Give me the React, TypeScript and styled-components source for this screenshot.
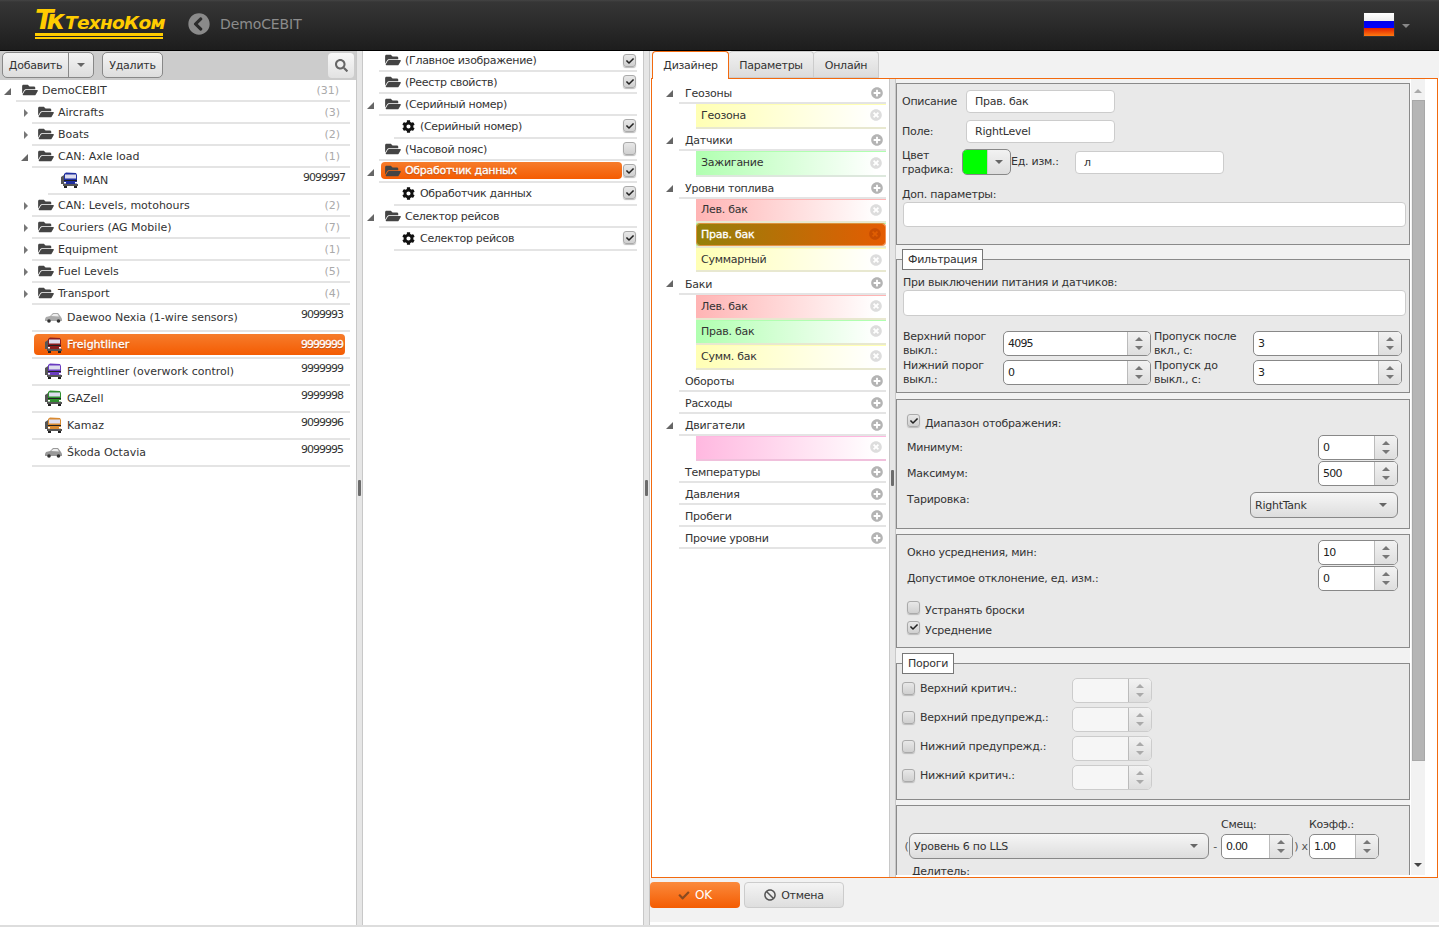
import React from "react";
import styled, { createGlobalStyle } from "styled-components";
import { FaFolderOpen, FaCog, FaCheck, FaPlusCircle, FaTimesCircle, FaBan, FaChevronCircleLeft, FaSearch } from "react-icons/fa";

const Global = createGlobalStyle`
  html, body { margin: 0; padding: 0; height: 927px; overflow: hidden; background: #fff; }
  body { font-family: "DejaVu Sans", Tahoma, sans-serif; font-size: 11px; color: #333; }
  * { box-sizing: border-box; }
`;

const Page = styled.div`width: 1439px; height: 927px; display: flex; flex-direction: column; overflow: hidden;`;

/* Header */
const Header = styled.header`
  height: 51px; flex: none; display: flex; align-items: center; padding: 0 29px 2px 35px;
  background: linear-gradient(#444 0, #363636 2px, #1d1d1d 100%); border-bottom: 1px solid #000;
`;
const Logo = styled.div`width: 133px; height: 30px; display: flex; flex-direction: column; color: #fc0; font-weight: 700; font-style: italic;`;
const LogoTop = styled.div`display: flex; align-items: baseline; height: 22px; line-height: 22px;`;
const LogoMark = styled.span`font-size: 27px; width: 30px; letter-spacing: -7px; flex: none;`;
const LogoName = styled.span`font-size: 18.5px; letter-spacing: -0.7px; white-space: nowrap;`;
const LogoRule = styled.div`height: ${p => p.$h}px; width: ${p => p.$w}px; background: #fc0; margin-top: ${p => p.$t}px;`;
const BackIcon = styled(FaChevronCircleLeft)`margin-left: 20px; width: 22px; height: 22px; color: #8a8a8a;`;
const HeaderTitle = styled.div`margin-left: 10px; font-size: 14px; color: #8c8c8c; letter-spacing: -0.1px;`;
const Flag = styled.div`margin-left: auto; width: 32px; height: 25px; background: linear-gradient(#fff 0, #eee 33%, #0000e8 33%, #0000ff 66%, #e02000 66%, #ff7a10 100%); border: 1px solid #333;`;
const Caret = styled.span`
  display: inline-block; width: 0; height: 0; border-style: solid; border-color: ${p => p.$c || "#666"} transparent transparent;
  border-width: ${p => p.$s || 4}px ${p => p.$s || 4}px 0; flex: none;
`;
const CaretUp = styled(Caret)`
  border-color: transparent transparent ${p => p.$c || "#666"}; border-width: 0 ${p => p.$s || 4}px ${p => p.$s || 4}px;
`;
const FlagCaret = styled(Caret)`margin: 4px 0 0 7px;`;

/* Shell */
const Main = styled.main`flex: none; display: flex; height: 876px; border-bottom: 2px solid #ddd;`;
const LeftPanel = styled.section`width: 356px; flex: none; display: flex; flex-direction: column; background: #fff;`;
const Splitter = styled.div`
  width: ${p => p.$w || 7}px; flex: none; background: #e6e6e6; border-left: 1px solid #c8c8c8; border-right: 1px solid #c8c8c8;
  display: flex; align-items: center; justify-content: center;
`;
const Handle = styled.div`width: 3px; height: 16px; background: #6c6c6c; border-radius: 1px;`;
const MiddlePanel = styled.section`width: 280px; flex: none; background: #fff; letter-spacing: -0.3px;`;
const RightPanel = styled.section`flex: 1; display: flex; flex-direction: column; background: #fff; min-width: 0; letter-spacing: -0.25px;`;

/* Toolbar */
const Toolbar = styled.div`height: 29px; flex: none; background: #ccc; display: flex; align-items: flex-start; padding: 1px 2px 0 2px; letter-spacing: -0.25px;`;
const ToolGroup = styled.div`display: flex; height: 26px; border: 1px solid #888; border-radius: 5px; background: linear-gradient(#f4f4f4, #ddd); margin-right: ${p => p.$mr || 0}px;`;
const ToolBtn = styled.div`display: flex; align-items: center; justify-content: center; width: ${p => p.$w}px; & + & { border-left: 1px solid #888; }`;
const SearchBtn = styled.div`
  margin: 1px 0 0 auto; width: 26px; height: 25px; border-radius: 4px; background: linear-gradient(#f8f8f8, #e2e2e2);
  display: flex; align-items: center; justify-content: center; color: #666; font-size: 13px;
`;

/* Vehicle tree */
const TreeRow = styled.div`display: flex; height: ${p => p.$h}px; margin-right: 6px;`;
const Gutter = styled.div`width: ${p => p.$w}px; flex: none; display: flex; align-items: center; justify-content: flex-end; padding-right: ${p => p.$pr || 5}px;`;
const RowBody = styled.div`flex: 1; min-width: 0; border-bottom: 2px solid #e4e4e4; display: flex; padding-bottom: ${p => p.$pb ?? 1}px;`;
const RowInner = styled.div`
  flex: 1; min-width: 0; display: flex; align-items: center; padding-left: ${p => p.$pl}px; padding-right: ${p => p.$pr || 0}px;
  margin: ${p => (p.$sel ? "2px 5px 1px 2px" : "0 5px 0 2px")}; border-radius: 4px;
  color: ${p => (p.$sel ? "#fff" : "#333")};
  ${p => p.$sel && "-webkit-text-stroke: 0.3px #fff; text-shadow: 0 1px 1px rgba(120,40,0,.5);"}
  background: ${p => (p.$sel ? "linear-gradient(#f67c2c, #f45c02)" : "none")};
`;
const Folder = styled(FaFolderOpen)`width: 16px; height: 14px; color: #444; flex: none; margin-right: 4px;`;
const Count = styled.span`margin-left: auto; color: #aaa;`;
const Code = styled.span`margin-left: auto; color: inherit; align-self: flex-start; margin-top: ${p => p.$mt || 4}px; letter-spacing: -1px;`;
const TriRight = styled.span`width: 0; height: 0; border-style: solid; border-width: 4px 0 4px 4px; border-color: transparent transparent transparent #777;`;
const TriCorner = styled.span`width: 0; height: 0; border-style: solid; border-width: 0 0 7px 7px; border-color: transparent transparent #666 transparent;`;
const VehicleSvg = styled.svg`flex: none; margin-right: 4px;`;

const Truck = ({ c }: { c: string }) => (
  <VehicleSvg width="19" height="18" viewBox="0 0 19 18">
    <path d="M4 3 L6 1.5 L16 2 L17 4 L17 13 L4 13 Z" fill={c} />
    <path d="M1 6 L4 4 L4 13 L1 13 Z" fill="#555" />
    <path d="M5 3.5 L16 3.5 L16 7.5 L5 7.5 Z" fill="#dde" />
    <rect x="4" y="9" width="13" height="1" fill="#222" />
    <rect x="3" y="13" width="15" height="2" fill="#555" />
    <rect x="4" y="11" width="2" height="1.5" fill="#fff" />
    <rect x="15" y="11" width="2" height="1.5" fill="#fff" />
    <rect x="4" y="15" width="3" height="2" fill="#222" />
    <rect x="14" y="15" width="3" height="2" fill="#222" />
  </VehicleSvg>
);
const Car = ({ c }: { c: string }) => (
  <VehicleSvg width="19" height="12" viewBox="0 0 19 12">
    <path d="M1 8 L2 6 L6 5 L9 2 L14 2 L17 6 L18 8 L18 10 L1 10 Z" fill={c} />
    <path d="M7 5 L9.5 3 L13.5 3 L15 5.5 Z" fill="#eee" />
    <circle cx="5" cy="10" r="1.8" fill="#333" />
    <circle cx="14.5" cy="10" r="1.8" fill="#333" />
  </VehicleSvg>
);

const folders: [string, string, boolean?][] = [
  ["Aircrafts", "(3)"], ["Boats", "(2)"], ["CAN: Axle load", "(1)", true],
];
const folders2: [string, string][] = [
  ["CAN: Levels, motohours", "(2)"], ["Couriers (AG Mobile)", "(7)"], ["Equipment", "(1)"], ["Fuel Levels", "(5)"], ["Transport", "(4)"],
];
const vehicles: { n: string; code: string; h: number; car?: boolean; c: string; sel?: boolean }[] = [
  { n: "Daewoo Nexia (1-wire sensors)", code: "9099993", h: 27, car: true, c: "#aaa" },
  { n: "Freightliner", code: "9999999", h: 27, c: "#8a1f1f", sel: true },
  { n: "Freightliner (overwork control)", code: "9999999", h: 27, c: "#6a3cc0" },
  { n: "GAZell", code: "9999998", h: 27, c: "#2f8f2f" },
  { n: "Kamaz", code: "9099996", h: 27, c: "#d98a30" },
  { n: "Škoda Octavia", code: "9099995", h: 27, car: true, c: "#999" },
];

const FolderRow = ({ n, c, open, h = 22 }: { n: string; c: string; open?: boolean; h?: number }) => (
  <TreeRow $h={h}>
    <Gutter $w={32} $pr={4}>{open ? <TriCorner /> : <TriRight />}</Gutter>
    <RowBody $pb={0}><RowInner $pl={4} $pr={5}><Folder />{n}<Count>{c}</Count></RowInner></RowBody>
  </TreeRow>
);

/* Middle tree */
const PropRow = styled.div`display: flex; height: ${p => p.$h}px;`;
const PropGutter = styled.div`width: ${p => p.$w}px; flex: none; display: flex; align-items: center; justify-content: flex-end; padding-right: ${p => p.$pr || 5}px;`;
const PropBody = styled.div`flex: 1; min-width: 0; border-bottom: 2px solid #e4e4e4; display: flex; padding-bottom: ${p => p.$pb ?? 1}px; margin-right: 6px;`;
const PropInner = styled.div`
  flex: 1; display: flex; align-items: center; min-width: 0; padding-left: ${p => p.$pl}px; margin: ${p => (p.$sel ? "1px 1px 1px 2px" : "0 1px 0 0")};
  border-radius: 4px; color: ${p => (p.$sel ? "#fff" : "#333")};
  ${p => p.$sel && "-webkit-text-stroke: 0.3px #fff; text-shadow: 0 1px 1px rgba(120,40,0,.5);"}
  background: ${p => (p.$sel ? "linear-gradient(#f67c2c, #f45c02)" : "none")};
`;
const Gear = styled(FaCog)`width: 13px; height: 13px; color: #111; flex: none; margin-right: 5px;`;
const CheckBox = styled.span`
  width: 13px; height: 13px; flex: none; border: 1px solid #aaa; border-radius: 3px; background: linear-gradient(#e8e8e8, #d0d0d0);
  box-shadow: 0 1px 1px #bbb; display: inline-flex; align-items: center; justify-content: center; color: #222; font-size: 8px;
`;
const RowCheck = styled(CheckBox)`margin: 3px 1px 0 0;`;
const ThreshCheck = styled(CheckBox)`margin-bottom: 5px;`;

const props: { n: string; h: number; t?: boolean; child?: boolean; on?: boolean; sel?: boolean; noBox?: boolean }[] = [
  { n: "(Главное изображение)", h: 21, on: true },
  { n: "(Реестр свойств)", h: 22, on: true },
  { n: "(Серийный номер)", h: 22, t: true, noBox: true },
  { n: "(Серийный номер)", h: 23, child: true, on: true },
  { n: "(Часовой пояс)", h: 22 },
  { n: "Обработчик данных", h: 22, t: true, on: true, sel: true },
  { n: "Обработчик данных", h: 23, child: true, on: true },
  { n: "Селектор рейсов", h: 22, t: true, noBox: true },
  { n: "Селектор рейсов", h: 23, child: true, on: true },
];

/* Tabs */
const Tabs = styled.div`height: 27px; flex: none; display: flex; padding-left: 2px; background: #f2f2f2;`;
const Tab = styled.div`
  width: ${p => p.$w}px; display: flex; align-items: center; justify-content: center; border-radius: 4px 4px 0 0;
  border: 1px solid ${p => (p.$on ? "#f26a0f" : "#ccc")};
  ${p => (p.$on ? "border-bottom: none; background: #fff; margin-bottom: -1px; position: relative; z-index: 1;" : "border-left: none; padding-top: 1px; background: linear-gradient(#f0f0f0, #dcdcdc);")}
`;
const ContentBox = styled.div`height: 800px; flex: none; margin: 0 1px; border: 1px solid #f26a0f; background: #fff; display: flex;`;
const DesignerCol = styled.div`width: 237px; flex: none; padding: 3px 2px 0 0;`;
const GroupRow = styled.div`display: flex; height: ${p => p.$h || 22}px;`;
const GroupGutter = styled.div`width: 27px; flex: none; display: flex; align-items: center; justify-content: flex-end; padding-right: 6px;`;
const GroupBody = styled.div`flex: 1; display: flex; align-items: center; border-bottom: 2px solid #e4e4e4; padding: 1px 3px 0 6px; margin-right: 1px; justify-content: space-between;`;
const GroupLabel = styled.span`padding-top: 2px;`;
const Plus = styled(FaPlusCircle)`width: 12px; height: 12px; color: #b4b4b4;`;
const Cross = styled(FaTimesCircle)`width: 12px; height: 12px; color: ${p => (p.$dim ? "rgba(190,70,0,.7)" : "#ddd")}; margin-left: auto;`;
const ItemRow = styled.div`
  height: ${p => p.$h}px; margin: 0 1px 0 44px; display: flex; align-items: center; padding: 0 4px ${p => p.$pb ?? 2}px 5px;
  background: linear-gradient(90deg, ${p => p.$c}, #fff 95%); border-top: 1px solid ${p => p.$c}; border-bottom: 2px solid ${p => p.$e || "#e8e8d0"};
`;
const ItemSel = styled.div`
  flex: 1; margin: 0 -3px 0 -4px; height: 21px; display: flex; align-items: center; padding: 0 4px; border-radius: 3px;
  background: linear-gradient(90deg, #94800a, #e45c02); color: #fff; -webkit-text-stroke: 0.3px #fff; box-shadow: 0 0 0 1px rgba(240,100,10,.7);
`;

type Item = { n: string; c: string; h: number; e?: string; sel?: boolean; pb?: number };
type G = { n: string; h?: number; open?: boolean; items?: Item[] };
const Y = "#ffffb4", GR = "#b0ffb0", R = "#ffb4b4", P = "#ffb8e0";
const groups: G[] = [
  { n: "Геозоны", open: true, items: [{ n: "Геозона", c: Y, h: 25 }] },
  { n: "Датчики", open: true, items: [{ n: "Зажигание", c: GR, h: 26, e: "#dde8dd" }] },
  { n: "Уровни топлива", open: true, items: [{ n: "Лев. бак", c: R, h: 24 }, { n: "Прав. бак", c: GR, h: 25, sel: true }, { n: "Суммарный", c: Y, h: 24, pb: 0 }] },
  { n: "Баки", open: true, h: 23, items: [{ n: "Лев. бак", c: R, h: 25 }, { n: "Прав. бак", c: GR, h: 25 }, { n: "Сумм. бак", c: Y, h: 25 }] },
  { n: "Обороты" }, { n: "Расходы" },
  { n: "Двигатели", open: true, items: [{ n: "", c: P, h: 25, e: "#f0c0dc" }] },
  { n: "Температуры" }, { n: "Давления" }, { n: "Пробеги" }, { n: "Прочие уровни" },
];

/* Form */
const FormView = styled.div`width: 514px; flex: none; height: 796px; overflow: hidden; background: #f2f2f2; padding-top: 4px;`;
const Section = styled.div`
  background: #e9e9e9; border: 1px solid #8a8a8a; margin-top: ${p => p.$mt || 0}px; width: 514px; height: ${p => p.$h}px;
  padding: ${p => p.$pt || 0}px ${p => p.$pr || 0}px 0 ${p => p.$pl || 0}px;
`;
const Field = styled.fieldset`
  margin: ${p => p.$mt || 0}px 0 0; padding: ${p => p.$pt || 0}px 0 0 ${p => p.$pl || 0}px; min-inline-size: 0; width: 514px; height: ${p => p.$h}px;
  border: 1px solid #8a8a8a; background: #e9e9e9;
`;
const Legend = styled.legend`
  margin-left: ${p => p.$ml || 0}px; padding: 0 5px; height: 21px; line-height: 19px; border: 1px solid #777; background: #fff; color: #333;
`;
const Row = styled.div`display: flex; align-items: ${p => p.$a || "center"}; height: ${p => p.$h}px; margin-top: ${p => p.$mt || 0}px; margin-left: ${p => p.$ml || 0}px;`;
const Label = styled.div`width: ${p => p.$w}px; flex: none; line-height: 14px; color: #333; margin-left: ${p => p.$ml || 0}px; padding-top: ${p => p.$pt || 0}px;`;
const Text = styled.div`height: ${p => p.$h}px; line-height: ${p => p.$h}px; margin-top: ${p => p.$mt || 0}px; margin-left: ${p => p.$ml || 0}px; color: #333; white-space: nowrap;`;
const TextInput = styled.div`
  width: ${p => p.$w}px; height: ${p => p.$h || 23}px; flex: none; background: #fff; border: 1px solid #ccc; border-radius: 4px; padding-left: 8px;
  display: flex; align-items: center; margin-left: ${p => p.$ml || 0}px; margin-top: ${p => p.$mt || 0}px;
`;
const ColorPick = styled.div`
  width: 49px; height: 26px; flex: none; border: 1px solid #888; border-radius: 5px; overflow: hidden; display: flex;
  background: linear-gradient(#f2f2f2, #ddd);
`;
const Swatch = styled.div`width: 24px; background: #00ff00;`;
const PickArrow = styled.div`flex: 1; display: flex; align-items: center; justify-content: center; border-left: 1px solid #ccc;`;
const SpinWrap = styled.div`
  width: ${p => p.$w}px; height: 25px; flex: none; display: flex; border: 1px solid ${p => (p.$off ? "#ccc" : "#888")}; border-radius: 5px; overflow: hidden;
  background: ${p => (p.$off ? "#f6f6f6" : "#fff")};
`;
const SpinValue = styled.div`flex: 1; display: flex; align-items: center; padding-left: 4px; color: #222; letter-spacing: -0.8px;`;
const SpinBtns = styled.div`width: 23px; flex: none; border-left: 1px solid #bbb; background: linear-gradient(#f2f2f2, #dedede); display: flex; flex-direction: column; align-items: center; justify-content: center; gap: 5px;`;
const Spin = ({ w, v, off }: { w: number; v?: string; off?: boolean }) => (
  <SpinWrap $w={w} $off={off}>
    <SpinValue>{v}</SpinValue>
    <SpinBtns><CaretUp $c={off ? "#aaa" : "#777"} $s={4} /><Caret $c={off ? "#aaa" : "#777"} $s={4} /></SpinBtns>
  </SpinWrap>
);
const Select = styled.div`
  width: ${p => p.$w}px; height: 26px; flex: none; border: 1px solid #888; border-radius: 6px; background: linear-gradient(#f6f6f6, #ddd);
  display: flex; align-items: center; justify-content: space-between; padding: 0 10px 0 4px;
`;
const Spacer = styled.div`flex: 1;`;
const CheckLabel = styled.span`margin-left: 5px; margin-top: 6px;`;
const ThreshLabel = styled.span`width: 157px; flex: none; padding-left: 5px; margin-bottom: 5px;`;
const Paren = styled.span`width: ${p => p.$w}px; flex: none; text-align: center; color: #555;`;

/* Scrollbar */
const ScrollCol = styled.div`width: 14px; flex: none; margin-left: 1px; height: 796px; background: #f2f2f2; display: flex; flex-direction: column; align-items: center; padding-top: 10px;`;
const Thumb = styled.div`width: 13px; height: 661px; margin-top: 7px; background: #b5b5b5; border: 1px solid #a8a8a8;`;
const ScrollEnd = styled(Caret)`margin-top: auto; margin-bottom: 8px;`;

/* Footer */
const Footer = styled.div`flex: none; height: 44px; background: #f2f2f2; display: flex; padding-top: 4px; gap: 4px;`;
const OkBtn = styled.div`
  width: 90px; height: 26px; border-radius: 4px; background: linear-gradient(#fb8a3c, #f45c02); color: #fff;
  display: flex; align-items: center; justify-content: center; gap: 5px; font-size: 12px;
`;
const OkIcon = styled(FaCheck)`color: #8a4a20; width: 12px; height: 11px;`;
const CancelBtn = styled.div`
  width: 100px; height: 26px; border-radius: 4px; border: 1px solid #ccc; background: linear-gradient(#f4f4f4, #dedede);
  display: flex; align-items: center; justify-content: center; gap: 5px;
`;
const BanIcon = styled(FaBan)`width: 12px; height: 12px; color: #555;`;

export default function App() {
  return (
    <Page>
      <Global />
      <Header>
        <Logo>
          <LogoTop><LogoMark>Тк</LogoMark><LogoName>ТехноКом</LogoName></LogoTop>
          <LogoRule $h={3} $w={128} $t={2} />
          <LogoRule $h={2} $w={128} $t={1} />
        </Logo>
        <BackIcon />
        <HeaderTitle>DemoCEBIT</HeaderTitle>
        <Flag />
        <FlagCaret $c="#888" />
      </Header>
      <Main>
        <LeftPanel>
          <Toolbar>
            <ToolGroup $mr={8}>
              <ToolBtn $w={65}>Добавить</ToolBtn>
              <ToolBtn $w={25}><Caret $s={4} /></ToolBtn>
            </ToolGroup>
            <ToolGroup><ToolBtn $w={59}>Удалить</ToolBtn></ToolGroup>
            <SearchBtn><FaSearch /></SearchBtn>
          </Toolbar>
          <TreeRow $h={22}>
            <Gutter $w={16} $pr={5}><TriCorner /></Gutter>
            <RowBody $pb={0}><RowInner $pl={4} $pr={6}><Folder />DemoCEBIT<Count>(31)</Count></RowInner></RowBody>
          </TreeRow>
          {folders.map(([n, c, o]) => <FolderRow key={n} n={n} c={c} open={o} />)}
          <TreeRow $h={27}>
            <Gutter $w={48} />
            <RowBody><RowInner $pl={10}><Truck c="#2030a0" />MAN<Code $mt={3}>9099997</Code></RowInner></RowBody>
          </TreeRow>
          {folders2.map(([n, c]) => <FolderRow key={n} n={n} c={c} />)}
          {vehicles.map(v => (
            <TreeRow key={v.n} $h={v.h}>
              <Gutter $w={32} />
              <RowBody>
                <RowInner $pl={10} $pr={2} $sel={v.sel}>
                  {v.car ? <Car c={v.c} /> : <Truck c={v.c} />}{v.n}<Code $mt={v.sel ? 0 : 3}>{v.code}</Code>
                </RowInner>
              </RowBody>
            </TreeRow>
          ))}
        </LeftPanel>
        <Splitter $w={7}><Handle /></Splitter>
        <MiddlePanel>
          {props.map((p, i) => (
            <PropRow key={i} $h={p.h}>
              <PropGutter $w={p.child ? 31 : 16} $pr={5}>{p.t && <TriCorner />}</PropGutter>
              <PropBody $pb={p.h === 22 && !p.sel ? 0 : 1}>
                <PropInner $pl={p.child ? 8 : p.sel ? 4 : 6} $sel={p.sel}>
                  {p.child ? <Gear /> : <Folder />}
                  {p.n}
                </PropInner>
                {!p.noBox && <RowCheck>{p.on && <FaCheck />}</RowCheck>}
              </PropBody>
            </PropRow>
          ))}
        </MiddlePanel>
        <Splitter $w={7}><Handle /></Splitter>
        <RightPanel>
          <Tabs>
            <Tab $w={77} $on>Дизайнер</Tab>
            <Tab $w={85}>Параметры</Tab>
            <Tab $w={65}>Онлайн</Tab>
          </Tabs>
          <ContentBox>
            <DesignerCol>
              {groups.map(g => (
                <React.Fragment key={g.n}>
                  <GroupRow $h={g.h}>
                    <GroupGutter>{g.open && <TriCorner />}</GroupGutter>
                    <GroupBody><GroupLabel>{g.n}</GroupLabel><Plus /></GroupBody>
                  </GroupRow>
                  {g.items?.map((it, i) => (
                    <ItemRow key={i} $c={it.c} $h={it.h} $e={it.e} $pb={it.pb}>
                      {it.sel
                        ? <ItemSel>{it.n}<Cross $dim /></ItemSel>
                        : <>{it.n}<Cross /></>}
                    </ItemRow>
                  ))}
                </React.Fragment>
              ))}
            </DesignerCol>
            <Splitter $w={7}><Handle /></Splitter>
            <FormView>
              <Section $h={162} $pt={6} $pl={5}>
                <Row $h={23}><Label $w={64}>Описание</Label><TextInput $w={149}>Прав. бак</TextInput></Row>
                <Row $h={23} $mt={7}><Label $w={64}>Поле:</Label><TextInput $w={149}>RightLevel</TextInput></Row>
                <Row $h={26} $mt={6}>
                  <Label $w={60} $pt={2}>Цвет графика:</Label>
                  <ColorPick><Swatch /><PickArrow><Caret /></PickArrow></ColorPick>
                  <Label $w={64}>Ед. изм.:</Label>
                  <TextInput $w={149}>л</TextInput>
                </Row>
                <Text $h={14} $mt={13}>Доп. параметры:</Text>
                <TextInput $w={503} $h={25} $ml={1} />
              </Section>
              <Field $mt={4} $h={144} $pt={6} $pl={6}>
                <Legend $ml={-1}>Фильтрация</Legend>
                <Text $h={14}>При выключении питания и датчиков:</Text>
                <TextInput $w={503} $h={26} />
                <Row $h={29} $mt={13}>
                  <Label $w={100}>Верхний порог выкл.:</Label><Spin w={148} v="4095" />
                  <Label $w={99} $ml={3}>Пропуск после вкл., с:</Label><Spin w={149} v="3" />
                </Row>
                <Row $h={29}>
                  <Label $w={100}>Нижний порог выкл.:</Label><Spin w={148} v="0" />
                  <Label $w={99} $ml={3}>Пропуск до выкл., с:</Label><Spin w={149} v="3" />
                </Row>
              </Field>
              <Section $mt={6} $h={130} $pt={14} $pl={10} $pr={11}>
                <Row $h={13}><CheckBox><FaCheck /></CheckBox><CheckLabel>Диапазон отображения:</CheckLabel></Row>
                <Row $h={26} $mt={7}>Минимум:<Spacer /><Spin w={80} v="0" /></Row>
                <Row $h={26}>Максимум:<Spacer /><Spin w={80} v="500" /></Row>
                <Row $h={26} $mt={6} $a="flex-start"><Text $h={14} $mt={1}>Тарировка:</Text><Spacer /><Select $w={148}>RightTank<Caret /></Select></Row>
              </Section>
              <Section $mt={5} $h={114} $pt={4} $pl={10} $pr={11}>
                <Row $h={26}>Окно усреднения, мин:<Spacer /><Spin w={80} v="10" /></Row>
                <Row $h={26}>Допустимое отклонение, ед. изм.:<Spacer /><Spin w={80} v="0" /></Row>
                <Row $h={14} $mt={9}><CheckBox /><CheckLabel>Устранять броски</CheckLabel></Row>
                <Row $h={14} $mt={6}><CheckBox><FaCheck /></CheckBox><CheckLabel>Усреднение</CheckLabel></Row>
              </Section>
              <Field $mt={5} $h={147} $pt={2} $pl={5}>
                <Legend>Пороги</Legend>
                {["Верхний критич.:", "Верхний предупрежд.:", "Нижний предупрежд.:", "Нижний критич.:"].map(t => (
                  <Row key={t} $h={29}><ThreshCheck /><ThreshLabel>{t}</ThreshLabel><Spin w={80} off /></Row>
                ))}
              </Field>
              <Section $mt={5} $h={120} $pt={9} $pl={7}>
                <Row $h={18}><Label $w={88} $ml={317} $pt={1}>Смещ:</Label><Label $w={70} $pt={1}>Коэфф.:</Label></Row>
                <Row $h={26}>
                  <Paren $w={5}>(</Paren>
                  <Select $w={300}>Уровень 6 по LLS<Caret /></Select>
                  <Paren $w={12}>-</Paren>
                  <Spin w={72} v="0.00" />
                  <Paren $w={16}>) x</Paren>
                  <Spin w={70} v="1.00" />
                </Row>
                <Text $h={14} $ml={8} $mt={6}>Делитель:</Text>
              </Section>
            </FormView>
            <ScrollCol>
              <CaretUp $c="#aaa" $s={4} />
              <Thumb />
              <ScrollEnd $c="#444" $s={4} />
            </ScrollCol>
          </ContentBox>
          <Footer>
            <OkBtn><OkIcon />OK</OkBtn>
            <CancelBtn><BanIcon />Отмена</CancelBtn>
          </Footer>
        </RightPanel>
      </Main>
    </Page>
  );
}
